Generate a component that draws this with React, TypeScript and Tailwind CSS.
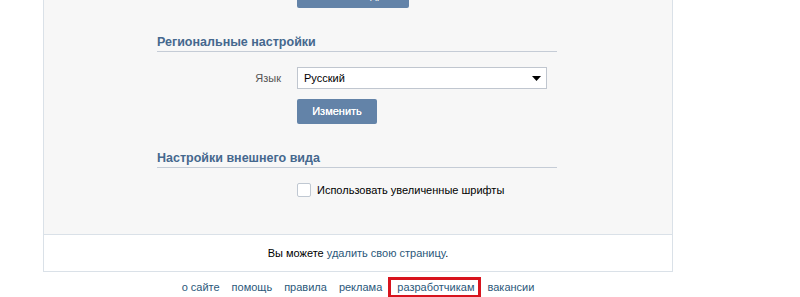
const font = { fontFamily: '"Liberation Sans", Arial, sans-serif' };

const footerLinks = ['о сайте', 'помощь', 'правила', 'реклама', 'разработчикам', 'вакансии'];

function SectionHeader({ title }: { title: string }) {
	return (
		<div className="h-[18px] w-[400px] border-b border-[#c5ccd6] text-[12.5px] font-bold leading-[16px] text-[#45688e]">
			{title}
		</div>
	);
}

export default function App() {
	return (
		<div className="h-[297px] w-[800px] overflow-hidden bg-white text-[11px] text-black" style={font}>
			<div className="ml-[43px] w-[630px] border-x border-b border-[#dae1e8]">
				<div className="bg-[#f7f7f7] pb-[37px] pl-[113px]">
					<div className="-mt-[17px] ml-[140px] flex h-[25px] w-[112px] items-center justify-center rounded-[2px] bg-[#6383a8] text-white">
						Изменить адрес
					</div>

					<div className="mt-[26px]">
						<SectionHeader title="Региональные настройки" />
					</div>
					<div className="mt-[15px] flex h-[22px] items-center">
						<div className="w-[125px] pr-[1px] text-right text-[#555]">Язык</div>
						<div className="ml-[15px] flex h-[22px] w-[250px] items-center justify-between border border-[#c0c6cf] bg-white pl-[6px] pr-[5px]">
							<span>Русский</span>
							<svg width="9" height="5" viewBox="0 0 9 5">
								<path d="M0 0h9L4.5 5z" fill="#000" />
							</svg>
						</div>
					</div>
					<div className="ml-[140px] mt-[10px] flex h-[25px] w-[80px] items-center justify-center rounded-[2px] bg-[#6383a8] text-white [text-shadow:0_0_0.4px_#fff]">
						Изменить
					</div>

					<div className="mt-[26px]">
						<SectionHeader title="Настройки внешнего вида" />
					</div>
					<div className="ml-[140px] mt-[15px] flex h-[14px] items-center gap-[6px]">
						<div className="h-[14px] w-[14px] rounded-[2px] border border-[#c0c8d2] bg-white" />
						<span>Использовать увеличенные шрифты</span>
					</div>
				</div>
				<div className="flex h-[37px] items-center justify-center border-t border-[#dae1e8] bg-white">
					<span>
						Вы можете <span className="text-[#2b587a]">удалить свою страницу</span>.
					</span>
				</div>
			</div>

			<div className="ml-[43px] mt-[5px] flex w-[630px] justify-center">
				{footerLinks.map((name) =>
					name === 'разработчикам' ? (
						<span key={name} className="flex h-[21px] items-center border-[3px] border-[#d8141e] pl-[6px] pr-[4px] text-[#2b587a]">
							{name}
						</span>
					) : (
						<span key={name} className="flex h-[21px] items-center px-[6px] text-[#2b587a]">
							{name}
						</span>
					)
				)}
			</div>
		</div>
	);
}
